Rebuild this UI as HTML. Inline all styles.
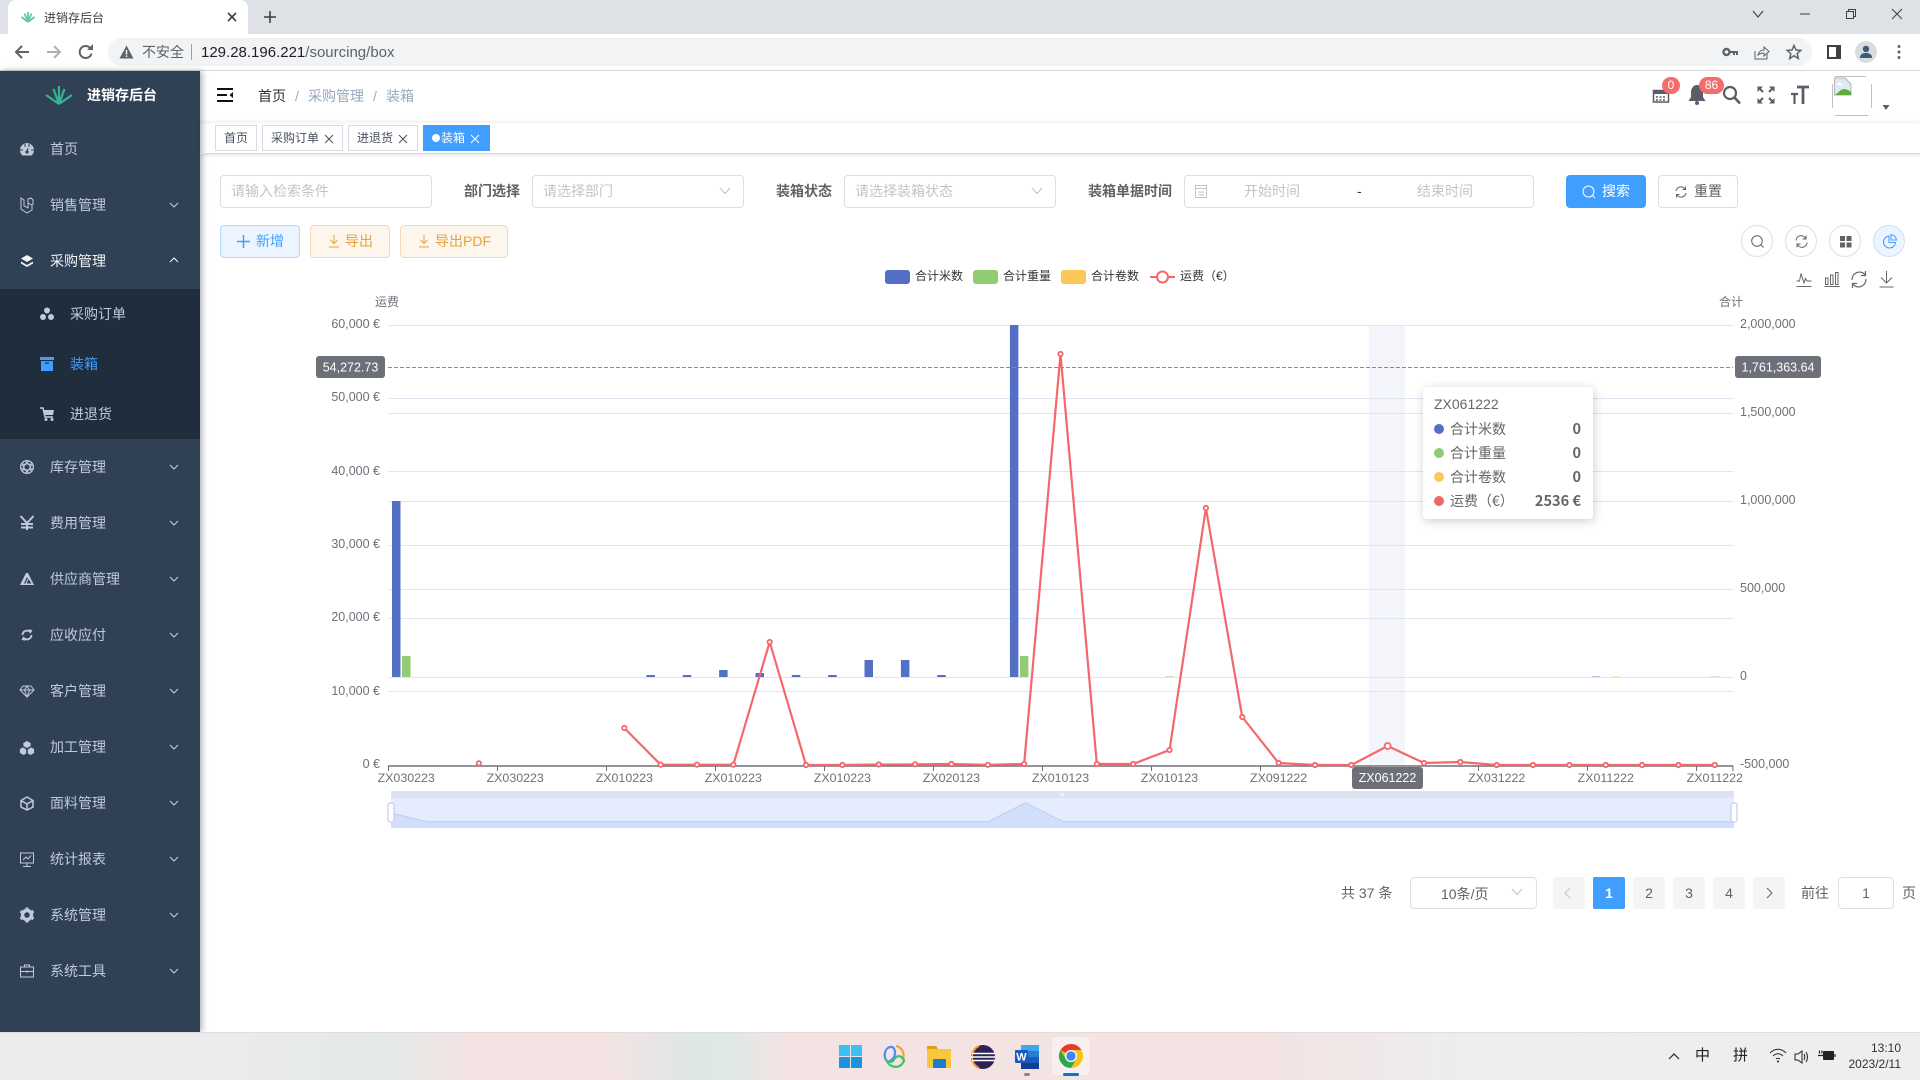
<!DOCTYPE html>
<html lang="zh-CN"><head><meta charset="utf-8"><title>进销存后台</title>
<style>
*{box-sizing:border-box}
html,body{margin:0;padding:0;width:1920px;height:1080px;overflow:hidden;background:#fff;font-family:"Liberation Sans","Noto Sans CJK SC",sans-serif;font-size:14px;color:#606266}
.a{position:absolute;white-space:nowrap}
svg{position:absolute;overflow:visible}
.row{position:absolute;left:0;width:200px;height:56px;line-height:56px;color:#bfcbd9;font-size:14px;padding-left:50px}
.sub{padding-left:70px;height:50px;line-height:50px}
.box{position:absolute;background:#fff;border:1px solid #dcdfe6;border-radius:4px;height:33px;line-height:31px;color:#c0c4cc;font-size:14px;padding-left:10px;white-space:nowrap}
.lb{position:absolute;top:175px;line-height:33px;font-weight:700;color:#606266;font-size:14px;white-space:nowrap}
.btn{position:absolute;border-radius:4px;height:33px;line-height:31px;font-size:14px;text-align:center;border:1px solid;white-space:nowrap}
.tag{position:absolute;top:125px;height:26px;line-height:24px;border:1px solid #d8dce5;font-size:12px;color:#495060;padding-left:8px;white-space:nowrap;background:#fff}
.pg{position:absolute;top:877px;width:32px;height:32px;line-height:32px;text-align:center;background:#f4f4f5;border-radius:2px;color:#606266;font-size:14px}
.cb{position:absolute;top:225px;width:32px;height:32px;border:1px solid #dcdfe6;border-radius:50%;background:#fff}
.tr{position:absolute;left:1434px;width:147px;height:24px;line-height:24px;font-size:14px;color:#666;padding-left:16px;font-family:"Noto Sans CJK SC","Liberation Sans",sans-serif}
.tr b{position:absolute;right:0;top:0;font-weight:700;color:#666;font-size:14.500px}
.tr i{position:absolute;left:0;top:7px;width:10px;height:10px;border-radius:50%}
</style></head><body>

<!-- browser chrome -->
<div class="a" style="left:0;top:0;width:1920px;height:34px;background:#dee1e6"></div>
<div class="a" style="left:8px;top:0;width:240px;height:34px;background:#fff;border-radius:8px 8px 0 0"></div>
<svg style="left:20px;top:9px" width="16" height="16" viewBox="0 0 16 16"><path d="M8 13 L8 3 M8 13 L4.500 4.500 M8 13 L11.500 4.500 M8 13 L1.500 8 M8 13 L14.500 8" stroke="#5fc9ab" stroke-width="1.800" fill="none"/></svg>
<div class="a" style="left:44px;top:11px;font-size:12px;line-height:15px;color:#3c4043">进销存后台</div>
<svg style="left:226px;top:11px" width="12" height="12"><path d="M2 2L10 10M10 2L2 10" stroke="#3c4043" stroke-width="1.600"/></svg>
<svg style="left:263px;top:10px" width="14" height="14"><path d="M7 1V13M1 7H13" stroke="#3c4043" stroke-width="1.600"/></svg>
<svg style="left:1751px;top:9px" width="14" height="10"><path d="M2 2L7 8L12 2" stroke="#3c4043" stroke-width="1.100" fill="none"/></svg>
<svg style="left:1800px;top:13px" width="10" height="2"><path d="M0 1H10" stroke="#3c4043" stroke-width="1"/></svg>
<svg style="left:1846px;top:9px" width="10" height="10"><path d="M0.500 2.500H7.500V9.500H0.500Z M2.500 2.500V0.500H9.500V7.500H7.500" stroke="#3c4043" fill="none"/></svg>
<svg style="left:1892px;top:9px" width="10" height="10"><path d="M0 0L10 10M10 0L0 10" stroke="#3c4043" stroke-width="1"/></svg>

<div class="a" style="left:0;top:34px;width:1920px;height:37px;background:#fff;border-bottom:1px solid #dadce0"></div>
<svg style="left:14px;top:44px" width="16" height="16"><path d="M15 8H2M8 2L2 8L8 14" stroke="#5f6368" stroke-width="2" fill="none"/></svg>
<svg style="left:46px;top:44px" width="16" height="16"><path d="M1 8H14M8 2L14 8L8 14" stroke="#aeb1b5" stroke-width="2" fill="none"/></svg>
<svg style="left:78px;top:44px" width="16" height="16"><path d="M13.500 9.500A6 6 0 1 1 12 3.800" stroke="#5f6368" stroke-width="2" fill="none"/><path d="M9 6H15V0Z" fill="#5f6368"/></svg>
<div class="a" style="left:108px;top:38px;width:1704px;height:28px;border-radius:14px;background:#f1f3f4"></div>
<svg style="left:119px;top:45px" width="15" height="14"><path d="M7.500 0.500L14.500 13.500H0.500Z" fill="#5f6368"/><path d="M7.500 5V9.500M7.500 10.500V12" stroke="#f1f3f4" stroke-width="1.500"/></svg>
<div class="a" style="left:142px;top:44px;font-size:14px;line-height:16px;color:#5f6368">不安全</div>
<div class="a" style="left:191px;top:44px;width:1px;height:16px;background:#9aa0a6"></div>
<div class="a" style="left:201px;top:44px;font-size:15px;line-height:17px;color:#202124">129.28.196.221<span style="color:#5f6368">/sourcing/box</span></div>
<svg style="left:1722px;top:46px" width="16" height="12"><circle cx="4.500" cy="6" r="3" fill="none" stroke="#5f6368" stroke-width="2.400"/><path d="M7 6H15V9M12 6V9" stroke="#5f6368" stroke-width="2" fill="none"/></svg>
<svg style="left:1754px;top:44px" width="16" height="16"><path d="M1 7V15H13V10" stroke="#5f6368" fill="none"/><path d="M4 11C5 7 8 6 10 6V3L15 7.500L10 12V9C8 9 6 9.500 4 11Z" stroke="#5f6368" fill="none"/></svg>
<svg style="left:1786px;top:44px" width="16" height="16"><path d="M8 1.500L10 6L14.800 6.400L11.200 9.600L12.300 14.500L8 11.800L3.700 14.500L4.800 9.600L1.200 6.400L6 6Z" stroke="#5f6368" stroke-width="1.500" fill="none"/></svg>
<svg style="left:1827px;top:45px" width="14" height="14"><path d="M1 1H13V13H1Z" fill="none" stroke="#3c4043" stroke-width="2"/><path d="M9 1H13V13H9Z" fill="#3c4043"/></svg>
<div class="a" style="left:1855px;top:41px;width:22px;height:22px;border-radius:50%;background:#dadce0"></div>
<svg style="left:1860px;top:45px" width="12" height="14"><circle cx="6" cy="4" r="3.200" fill="#3c5a7a"/><path d="M0 13C0 9 3 8 6 8S12 9 12 13Z" fill="#3c5a7a"/></svg>
<svg style="left:1897px;top:44px" width="4" height="16"><circle cx="2" cy="2.500" r="1.500" fill="#5f6368"/><circle cx="2" cy="8" r="1.500" fill="#5f6368"/><circle cx="2" cy="13.500" r="1.500" fill="#5f6368"/></svg>

<!-- sidebar -->
<div class="a" style="left:0;top:71px;width:200px;height:961px;background:#304156;box-shadow:2px 0 6px rgba(0,21,41,.35)"></div>
<div class="a" style="left:0;top:289px;width:200px;height:150px;background:#1f2d3d"></div>
<svg style="left:45px;top:85px" width="28" height="20" viewBox="0 0 28 20"><path d="M14 19L14 1M14 19L8.500 4M14 19L19.500 4M14 19L1 10M14 19L27 10" stroke="#36b392" stroke-width="2.200" fill="none"/></svg>
<div class="a" style="left:87px;top:87px;font-size:14px;line-height:17px;font-weight:700;color:#fff">进销存后台</div>

<div class="row" style="top:121px">首页</div>
<div class="row" style="top:177px">销售管理</div>
<div class="row" style="top:233px;color:#f4f4f5">采购管理</div>
<div class="row sub" style="top:289px">采购订单</div>
<div class="row sub" style="top:339px;color:#409eff">装箱</div>
<div class="row sub" style="top:389px">进退货</div>
<div class="row" style="top:439px">库存管理</div>
<div class="row" style="top:495px">费用管理</div>
<div class="row" style="top:551px">供应商管理</div>
<div class="row" style="top:607px">应收应付</div>
<div class="row" style="top:663px">客户管理</div>
<div class="row" style="top:719px">加工管理</div>
<div class="row" style="top:775px">面料管理</div>
<div class="row" style="top:831px">统计报表</div>
<div class="row" style="top:887px">系统管理</div>
<div class="row" style="top:943px">系统工具</div>

<svg style="left:0;top:0" width="200" height="1032" fill="none" stroke="#bfcbd9">
<g stroke-width="1.100">
<path d="M170 203l4 4 4-4"/><path d="M170 262l4-4 4 4" stroke="#f4f4f5"/>
<path d="M170 465l4 4 4-4"/><path d="M170 521l4 4 4-4"/><path d="M170 577l4 4 4-4"/><path d="M170 633l4 4 4-4"/><path d="M170 689l4 4 4-4"/><path d="M170 745l4 4 4-4"/><path d="M170 801l4 4 4-4"/><path d="M170 857l4 4 4-4"/><path d="M170 913l4 4 4-4"/><path d="M170 969l4 4 4-4"/>
</g>
<!-- dashboard -->
<path d="M22.500 155.500A7 7 0 1 1 31.500 155.500Z" fill="#bfcbd9" stroke="none"/><circle cx="27" cy="152" r="1.600" fill="#304156" stroke="none"/><path d="M25 144V147M29 144V147M20 150H23M31 150H34M27 152L28 148" stroke="#304156" stroke-width="1"/>
<!-- laravel-like -->
<path d="M21 199V209L27 213L32 210V205L28 203V208L24 206V200L21 198ZM28 203L28 199L31 198L33 200V205"/>
<!-- layers -->
<path d="M27 255L33 258.500L27 262L21 258.500Z" fill="#f4f4f5" stroke="none"/><path d="M21 261.500L27 265L33 261.500V263.500L27 267L21 263.500Z" fill="#f4f4f5" stroke="none"/>
<!-- three dots -->
<circle cx="47" cy="310.500" r="3" fill="#bfcbd9" stroke="none"/><circle cx="43" cy="317" r="3" fill="#bfcbd9" stroke="none"/><circle cx="51" cy="317" r="3" fill="#bfcbd9" stroke="none"/>
<!-- archive box -->
<path d="M40 357H54V360H40Z" fill="#409eff" stroke="none"/><path d="M41 361H53V371H41Z" fill="#409eff" stroke="none"/><path d="M45 363H49" stroke="#1f2d3d" stroke-width="1.200"/>
<!-- cart -->
<path d="M40 408H43L45 417H53" stroke-width="1.600"/><path d="M44 410H54L53 415H45Z" fill="#bfcbd9" stroke="none"/><circle cx="46" cy="419.500" r="1.500" fill="#bfcbd9" stroke="none"/><circle cx="52" cy="419.500" r="1.500" fill="#bfcbd9" stroke="none"/>
<!-- knot -->
<g stroke-width="1"><circle cx="27" cy="467" r="6.500"/><ellipse cx="27" cy="467" rx="6.500" ry="3"/><ellipse cx="27" cy="467" rx="6.500" ry="3" transform="rotate(60 27 467)"/><ellipse cx="27" cy="467" rx="6.500" ry="3" transform="rotate(120 27 467)"/></g>
<!-- yen -->
<path d="M20.500 516L27 523L33.500 516M27 523V530M21 524H33M21 527.500H33" stroke-width="2"/>
<!-- triangle -->
<path d="M26 573H28L34 585H20ZM27 577L24 583.500H25.500L27.800 578.500ZM28.500 579L26.800 583.500H31.500Z" fill="#bfcbd9" fill-rule="evenodd" stroke="none"/>
<!-- refresh -->
<path d="M22.500 635A4.500 4.500 0 0 1 30 631.800M31.500 635A4.500 4.500 0 0 1 24 638.200" stroke-width="1.800"/><path d="M29 629L32.500 630.500L30 634ZM25 641L21.500 639.500L24 636Z" fill="#bfcbd9" stroke="none"/>
<!-- diamond -->
<path d="M23 686H31L34 690L27 697L20 690ZM20 690H34M24.500 690L27 697L29.500 690L27 686L24.500 690" stroke-width="1"/>
<!-- cubes -->
<path d="M27 740.500L31 742.800V747.200L27 749.500L23 747.200V742.800Z M23.500 746.500L27.500 748.800V753.200L23.500 755.500L19.500 753.200V748.800Z M30.500 746.500L34.500 748.800V753.200L30.500 755.500L26.500 753.200V748.800Z" fill="#bfcbd9" stroke="#304156" stroke-width=".8"/>
<!-- cube outline -->
<path d="M27 797L33 800.500V807L27 810L21 807V800.500ZM21 800.500L27 804L33 800.500M27 804V810" stroke-width="1.500"/>
<!-- monitor -->
<path d="M20.500 853H33.500V863H20.500ZM27 863V866M23 866.500H31M23 860L26 857L28 859L31 855.500" stroke-width="1"/>
<!-- gear -->
<circle cx="27" cy="915" r="4.500" stroke-width="3.500"/><path d="M27 907.500V909M27 921V922.500M20.500 911.200L21.800 912M32.200 918L33.500 918.800M20.500 918.800L21.800 918M32.200 912L33.500 911.200" stroke-width="3"/>
<!-- case -->
<path d="M20.500 967H33.500V977H20.500ZM24.500 967V965H29.500V967M20.500 971.500H33.500M27 970.500V973" stroke-width="1"/>
</svg>

<!-- header -->
<div class="a" style="left:200px;top:71px;width:1720px;height:50px;box-shadow:0 1px 4px rgba(0,21,41,.08)"></div>
<svg style="left:217px;top:88px" width="16" height="14"><path d="M0 1H16M0 7H10M0 13H16" stroke="#111" stroke-width="2"/><path d="M16 4V10L12.500 7Z" fill="#111"/></svg>
<div class="a" style="left:258px;top:88px;font-size:14px;line-height:16px;color:#303133;font-weight:400">首页</div>
<div class="a" style="left:295px;top:88px;font-size:14px;line-height:16px;color:#97a8be">/</div>
<div class="a" style="left:308px;top:88px;font-size:14px;line-height:16px;color:#97a8be">采购管理</div>
<div class="a" style="left:373px;top:88px;font-size:14px;line-height:16px;color:#97a8be">/</div>
<div class="a" style="left:386px;top:88px;font-size:14px;line-height:16px;color:#97a8be">装箱</div>

<svg style="left:0;top:0" width="1920" height="125" fill="none">
<!-- calendar -->
<path d="M1653.500 90.500H1668.500V102H1653.500Z" stroke="#5a5e66" stroke-width="1.500"/><path d="M1653.500 90H1668.500V94H1653.500Z" fill="#5a5e66"/><path d="M1656 97H1666M1656 100H1666" stroke="#5a5e66" stroke-width="1.500" stroke-dasharray="2 1.500"/>
<!-- bell -->
<path d="M1697 85C1693 85 1691 89 1691 92V97L1688.500 101H1705.500L1703 97V92C1703 89 1701 85 1697 85Z" fill="#5a5e66"/><circle cx="1697" cy="103" r="2" fill="#5a5e66"/>
<!-- search -->
<circle cx="1730" cy="93" r="6" stroke="#5a5e66" stroke-width="2.200"/><path d="M1734.500 97.500L1740 103.500" stroke="#5a5e66" stroke-width="2.600"/>
<!-- fullscreen -->
<path d="M1757.500 86.500H1763L1757.500 92ZM1774.500 86.500H1769L1774.500 92ZM1757.500 103.500H1763L1757.500 98ZM1774.500 103.500H1769L1774.500 98Z" fill="#5a5e66"/><path d="M1759 88L1763 92M1773 88L1769 92M1759 102L1763 98M1773 102L1769 98" stroke="#5a5e66" stroke-width="2"/>
<!-- size -->
<path d="M1797 87H1809M1803 87V104" stroke="#5a5e66" stroke-width="2.800"/><path d="M1791 94H1798M1794.500 94V104" stroke="#5a5e66" stroke-width="2.200"/>
<!-- caret -->
<path d="M1882.500 105H1889.500L1886 110Z" fill="#5a5e66"/>
<!-- avatar box -->
<path d="M1832.500 84V108M1871.500 84V108M1835 76.500H1866M1835 115.500H1868" stroke="#c0c0c0" stroke-width="1"/>
<path d="M1834.500 78H1845L1851 84V95H1834.500Z" fill="#dfe8f5" stroke="#b5b5b5"/><path d="M1835 95L1841 90C1845 88 1848 90 1851 92V95Z" fill="#5cab3c"/><path d="M1836 85L1839 82L1844 86Z" fill="#fff"/>
</svg>
<div class="a" style="left:1662px;top:77px;width:18px;height:17px;border-radius:9px;background:#f56c6c;color:#fff;font-size:12px;line-height:17px;text-align:center">0</div>
<div class="a" style="left:1699px;top:77px;width:25px;height:17px;border-radius:9px;background:#f56c6c;color:#fff;font-size:12px;line-height:17px;text-align:center">86</div>

<!-- tags -->
<div class="a" style="left:200px;top:121px;width:1720px;height:33px;border-bottom:1px solid #d8dce5;box-shadow:0 1px 3px rgba(0,0,0,.12)"></div>
<div class="tag" style="left:215px;width:42px">首页</div>
<div class="tag" style="left:262px;width:81px">采购订单<svg style="left:62px;top:9px" width="8" height="8"><path d="M0 0L8 8M8 0L0 8" stroke="#495060"/></svg></div>
<div class="tag" style="left:348px;width:70px">进退货<svg style="left:50px;top:9px" width="8" height="8"><path d="M0 0L8 8M8 0L0 8" stroke="#495060"/></svg></div>
<div class="tag" style="left:423px;width:67px;background:#409eff;border-color:#409eff;color:#fff"><span style="display:inline-block;width:8px;height:8px;border-radius:50%;background:#fff;margin-right:1px"></span>装箱<svg style="left:47px;top:9px" width="8" height="8"><path d="M0 0L8 8M8 0L0 8" stroke="#fff"/></svg></div>

<!-- filter -->
<div class="box" style="left:220px;top:175px;width:212px">请输入检索条件</div>
<div class="lb" style="left:464px">部门选择</div>
<div class="box" style="left:532px;top:175px;width:212px">请选择部门</div>
<div class="lb" style="left:776px">装箱状态</div>
<div class="box" style="left:844px;top:175px;width:212px">请选择装箱状态</div>
<div class="lb" style="left:1088px">装箱单据时间</div>
<div class="box" style="left:1184px;top:175px;width:350px"></div>
<div class="a" style="left:1244px;top:175px;line-height:33px;color:#c0c4cc">开始时间</div>
<div class="a" style="left:1357px;top:175px;line-height:33px;color:#303133">-</div>
<div class="a" style="left:1417px;top:175px;line-height:33px;color:#c0c4cc">结束时间</div>
<svg style="left:0;top:0" width="1920" height="260" fill="none">
<path d="M720 188l5 5.500 5-5.500M1032 188l5 5.500 5-5.500" stroke="#c0c4cc" stroke-width="1.100"/>
<path d="M1195.500 185.500H1206.500V197.500H1195.500ZM1195.500 188.500H1206.500M1198 192H1204M1198 195H1204" stroke="#c0c4cc"/>
</svg>
<div class="btn" style="left:1566px;top:175px;width:80px;background:#409eff;border-color:#409eff;color:#fff;padding-left:20px">搜索<svg style="left:15px;top:9px" width="14" height="14" fill="none"><circle cx="6.500" cy="6.500" r="5.500" stroke="#fff"/><path d="M10.500 10.500L13 13" stroke="#fff"/></svg></div>
<div class="btn" style="left:1658px;top:175px;width:80px;background:#fff;border-color:#dcdfe6;color:#606266;padding-left:20px">重置<svg style="left:16px;top:10px" width="12" height="12" fill="none"><path d="M1 5A5 5 0 0 1 10 3M11 7A5 5 0 0 1 2 9" stroke="#606266"/><path d="M10.500 0.500V3.500H7.500M1.500 11.500V8.500H4.500" stroke="#606266"/></svg></div>

<div class="btn" style="left:220px;top:225px;width:80px;background:#ecf5ff;border-color:#b3d8ff;color:#409eff;padding-left:20px">新增<svg style="left:16px;top:9px" width="13" height="13"><path d="M6.500 0V13M0 6.500H13" stroke="#409eff" stroke-width="1.500"/></svg></div>
<div class="btn" style="left:310px;top:225px;width:80px;background:#fdf6ec;border-color:#f5dab1;color:#e6a23c;padding-left:18px">导出<svg style="left:17px;top:9px" width="12" height="13" fill="none"><path d="M6 0V8M2.500 5L6 8.500L9.500 5M1 12H11" stroke="#e6a23c"/></svg></div>
<div class="btn" style="left:400px;top:225px;width:108px;background:#fdf6ec;border-color:#f5dab1;color:#e6a23c;padding-left:18px">导出PDF<svg style="left:17px;top:9px" width="12" height="13" fill="none"><path d="M6 0V8M2.500 5L6 8.500L9.500 5M1 12H11" stroke="#e6a23c"/></svg></div>

<div class="cb" style="left:1741px"><svg style="left:9px;top:9px" width="13" height="13" fill="none"><circle cx="6" cy="6" r="5.300" stroke="#606266"/><path d="M10 10L12.500 12.500" stroke="#606266"/></svg></div>
<div class="cb" style="left:1785px"><svg style="left:9px;top:9px" width="13" height="13" fill="none"><path d="M1 5.500A5 5 0 0 1 10.500 3.500M12 7.500A5 5 0 0 1 2.500 9.500" stroke="#606266"/><path d="M11 0.500V4H7.500M2 12.500V9H5.500" stroke="#606266"/></svg></div>
<div class="cb" style="left:1829px"><svg style="left:9px;top:9px" width="13" height="13"><path d="M1 1H6V6H1ZM7.500 1H12.500V6H7.500ZM1 7.500H6V12.500H1ZM7.500 7.500H12.500V12.500H7.500Z" fill="#606266"/></svg></div>
<div class="cb" style="left:1873px;background:#ecf5ff;border-color:#c6e2ff"><svg style="left:9px;top:8px" width="14" height="14" fill="none"><path d="M6 2A6 6 0 1 0 12.500 8.500H6ZM8 0.500A6 6 0 0 1 13.500 6H8Z" stroke="#409eff"/></svg></div>

<!-- chart -->
<svg style="left:0;top:0;font-family:'Liberation Sans','Noto Sans CJK SC',sans-serif" width="1920" height="1032" font-size="12.500" fill="#6e7079">
<!-- legend -->
<rect x="885" y="270" width="25" height="14" rx="3" fill="#5470c6"/>
<rect x="973" y="270" width="25" height="14" rx="3" fill="#91cc75"/>
<rect x="1061" y="270" width="25" height="14" rx="3" fill="#fac858"/>
<path d="M1150 277H1175" stroke="#f4686c" stroke-width="2"/><circle cx="1162.500" cy="277" r="5.500" fill="#fff" stroke="#f4686c" stroke-width="2"/>
<g font-size="12" fill="#333"><text x="915" y="280">合计米数</text><text x="1003" y="280">合计重量</text><text x="1091" y="280">合计卷数</text><text x="1180" y="280">运费（€）</text></g>
<!-- toolbox -->
<g fill="none" stroke="#666" stroke-width="1" transform="translate(0 -1)">
<path d="M1796.500 287.500H1811.500M1796.500 282H1799.500L1801 274.500L1804 284L1805.500 279.500L1807 282H1811.500"/>
<path d="M1824.500 287.500H1839.500M1825.500 285.500V279H1828V285.500ZM1830.500 285.500V276H1833V285.500ZM1835.500 285.500V273.500H1838V285.500Z"/>
<path d="M1852 281A7.500 7.500 0 0 1 1865 275.500M1866 280A7.500 7.500 0 0 1 1853 285.500" stroke-width="1.200"/><path d="M1865.500 272V276.500H1861M1852.500 289V284.500H1857" stroke-width="1.200"/>
<path d="M1886.500 272V284M1881 278.500L1886.500 284L1892 278.500M1879.500 288H1893.500"/>
</g>
<!-- axis names -->
<g font-size="12"><text x="387" y="306" text-anchor="middle">运费</text><text x="1731" y="306" text-anchor="middle">合计</text></g>
<!-- shadow -->
<rect x="1369" y="325" width="36" height="441" fill="#f3f5fb"/>
<!-- grid -->
<g stroke="#e0e6f1" stroke-width="1" fill="none">
<path d="M388 325.500H1733M388 398.500H1733M388 471.500H1733M388 545.500H1733M388 618.500H1733M388 691.500H1733"/>
<path d="M388 413.500H1733M388 501.500H1733M388 589.500H1733M388 677.500H1733"/>
</g>
<!-- bars -->
<g fill="#5470c6">
<rect x="392" y="501" width="8.500" height="176"/>
<rect x="646.400" y="675" width="8.500" height="2"/>
<rect x="682.800" y="675" width="8.500" height="2"/>
<rect x="719.100" y="670" width="8.500" height="7"/>
<rect x="755.500" y="673" width="8.500" height="4"/>
<rect x="791.800" y="675" width="8.500" height="2"/>
<rect x="828.200" y="675" width="8.500" height="2"/>
<rect x="864.500" y="660" width="8.500" height="17"/>
<rect x="900.900" y="660" width="8.500" height="17"/>
<rect x="937.200" y="675" width="8.500" height="2"/>
<rect x="1009.900" y="325" width="8.500" height="352"/>
<rect x="1591.500" y="676" width="8.500" height="1" opacity=".4"/>
</g>
<g fill="#91cc75">
<rect x="402" y="656" width="8.500" height="21"/>
<rect x="1019.900" y="656" width="8.500" height="21"/>
<rect x="1165.300" y="676" width="8.500" height="1" opacity=".5"/>
<rect x="1710.600" y="676" width="8.500" height="1" opacity=".4"/>
</g>
<rect x="1611.500" y="676" width="8.500" height="1" fill="#fac858" opacity=".5"/>
<!-- x axis -->
<path d="M388 766H1733" stroke="#6e7079" stroke-width="1.500"/>
<path d="M388.500 766V771M497.500 766V771M606.500 766V771M715.500 766V771M824.500 766V771M933.500 766V771M1042.500 766V771M1151.500 766V771M1260.500 766V771M1369.500 766V771M1478.500 766V771M1587.500 766V771M1696.500 766V771M1733 766V771" stroke="#6e7079" stroke-width="1"/>
<g text-anchor="middle" font-size="12.400">
<text x="406.200" y="782">ZX030223</text><text x="515.200" y="782">ZX030223</text><text x="624.300" y="782">ZX010223</text><text x="733.300" y="782">ZX010223</text><text x="842.400" y="782">ZX010223</text><text x="951.400" y="782">ZX020123</text><text x="1060.500" y="782">ZX010123</text><text x="1169.500" y="782">ZX010123</text><text x="1278.600" y="782">ZX091222</text><text x="1496.700" y="782">ZX031222</text><text x="1605.800" y="782">ZX011222</text><text x="1714.800" y="782">ZX011222</text>
</g>
<!-- left labels -->
<g text-anchor="end"><text x="380" y="328">60,000 €</text><text x="380" y="401">50,000 €</text><text x="380" y="475">40,000 €</text><text x="380" y="548">30,000 €</text><text x="380" y="621">20,000 €</text><text x="380" y="695">10,000 €</text><text x="380" y="768">0 €</text></g>
<!-- right labels -->
<g><text x="1740" y="328">2,000,000</text><text x="1740" y="416">1,500,000</text><text x="1740" y="504">1,000,000</text><text x="1740" y="592">500,000</text><text x="1740" y="680">0</text><text x="1740" y="768">-500,000</text></g>
<!-- crosshair -->
<path d="M388 367.500H1733" stroke="#8a8a8a" stroke-width="1" stroke-dasharray="4 2"/>
<!-- line -->
<polyline fill="none" stroke="#f4686c" stroke-width="2.200" stroke-linejoin="bevel" points="624.300,728 660.650,764.700 697,764.700 733.350,764.700 769.700,642 806.050,765 842.400,765 878.750,764.500 915.100,764.300 951.450,764 987.800,764.800 1024.150,764 1060.500,354 1096.850,764 1133.200,764 1169.550,750 1205.900,508 1242.250,717 1278.600,763 1314.950,765 1351.300,765 1387.650,746 1424,763 1460.350,762 1496.700,765 1533.050,765 1569.400,765 1605.750,765 1642.100,765 1678.450,765 1714.800,765"/>
<g fill="#fff" stroke="#f4686c" stroke-width="1.800">
<circle cx="478.900" cy="763.300" r="2.200"/><circle cx="624.300" cy="728" r="2.200"/><circle cx="660.650" cy="764.700" r="2.200"/><circle cx="697" cy="764.700" r="2.200"/><circle cx="733.350" cy="764.700" r="2.200"/><circle cx="769.700" cy="642" r="2.200"/><circle cx="806.050" cy="765" r="2.200"/><circle cx="842.400" cy="765" r="2.200"/><circle cx="878.750" cy="764.500" r="2.200"/><circle cx="915.100" cy="764.300" r="2.200"/><circle cx="951.450" cy="764" r="2.200"/><circle cx="987.800" cy="764.800" r="2.200"/><circle cx="1024.150" cy="764" r="2.200"/><circle cx="1060.500" cy="354" r="2.200"/><circle cx="1096.850" cy="764" r="2.200"/><circle cx="1133.200" cy="764" r="2.200"/><circle cx="1169.550" cy="750" r="2.200"/><circle cx="1205.900" cy="508" r="2.200"/><circle cx="1242.250" cy="717" r="2.200"/><circle cx="1278.600" cy="763" r="2.200"/><circle cx="1314.950" cy="765" r="2.200"/><circle cx="1351.300" cy="765" r="2.200"/><circle cx="1387.650" cy="746" r="3"/><circle cx="1424" cy="763" r="2.200"/><circle cx="1460.350" cy="762" r="2.200"/><circle cx="1496.700" cy="765" r="2.200"/><circle cx="1533.050" cy="765" r="2.200"/><circle cx="1569.400" cy="765" r="2.200"/><circle cx="1605.750" cy="765" r="2.200"/><circle cx="1642.100" cy="765" r="2.200"/><circle cx="1678.450" cy="765" r="2.200"/><circle cx="1714.800" cy="765" r="2.200"/>
</g>
<!-- axis pointer labels -->
<rect x="316" y="356" width="69" height="22" rx="3" fill="#6e7079"/><text x="350.500" y="371.500" text-anchor="middle" fill="#fff">54,272.73</text>
<rect x="1735" y="356" width="86" height="22" rx="3" fill="#6e7079"/><text x="1778" y="371.500" text-anchor="middle" fill="#fff">1,761,363.64</text>
<rect x="1352" y="767" width="71" height="22" rx="3" fill="#6e7079"/><text x="1387.500" y="782" text-anchor="middle" fill="#fff">ZX061222</text>
<!-- datazoom -->
<rect x="391" y="791" width="1343" height="7" fill="#dde3ee"/>
<rect x="391" y="798" width="1343" height="30" fill="#e5ecfd"/>
<path d="M391 813L427.500 821.700H988L1025.500 802.700L1063 821.700H1734V828H391Z" fill="#d2dffb"/>
<path d="M391 813L427.500 821.700H988L1025.500 802.700L1063 821.700H1734" fill="none" stroke="#bccdf5"/>
<rect x="388" y="803" width="6" height="19" rx="2" fill="#fff" stroke="#bcc6dc"/>
<rect x="1731" y="803" width="6" height="19" rx="2" fill="#fff" stroke="#bcc6dc"/>
<path d="M1061 793V796M1063 793V796" stroke="#fff"/>
</svg>

<!-- tooltip -->
<div class="a" style="left:1423px;top:387px;width:170px;height:132px;background:#fff;border-radius:4px;box-shadow:1px 2px 10px rgba(0,0,0,.2)"></div>
<div class="a" style="left:1434px;top:396px;font-size:14px;line-height:17px;color:#666">ZX061222</div>
<div class="tr" style="top:417px"><i style="background:#5470c6"></i>合计米数<b>0</b></div>
<div class="tr" style="top:441px"><i style="background:#91cc75"></i>合计重量<b>0</b></div>
<div class="tr" style="top:465px"><i style="background:#fac858"></i>合计卷数<b>0</b></div>
<div class="tr" style="top:489px"><i style="background:#ee6666"></i>运费（€）<b>2536 €</b></div>

<!-- pagination -->
<div class="a" style="left:1341px;top:885px;font-size:14px;line-height:16px;color:#606266">共 37 条</div>
<div class="box" style="left:1410px;top:877px;width:127px;height:32px;line-height:32px;color:#606266;font-size:14px;padding-left:30px">10条/页</div>
<svg style="left:1511px;top:888px" width="12" height="8" fill="none"><path d="M1 1l5 5.500 5-5.500" stroke="#c0c4cc" stroke-width="1.100"/></svg>
<div class="pg" style="left:1553px"></div><svg style="left:1564px;top:887px" width="8" height="12" fill="none"><path d="M6 1L1 6L6 11" stroke="#c0c4cc"/></svg>
<div class="pg" style="left:1593px;background:#409eff;color:#fff;font-weight:700">1</div>
<div class="pg" style="left:1633px">2</div>
<div class="pg" style="left:1673px">3</div>
<div class="pg" style="left:1713px">4</div>
<div class="pg" style="left:1753px"></div><svg style="left:1766px;top:887px" width="8" height="12" fill="none"><path d="M1 1L6 6L1 11" stroke="#606266"/></svg>
<div class="a" style="left:1801px;top:885px;font-size:14px;line-height:16px;color:#606266">前往</div>
<div class="box" style="left:1838px;top:877px;width:56px;height:32px;line-height:30px;color:#606266;font-size:14px;padding:0;text-align:center">1</div>
<div class="a" style="left:1902px;top:885px;font-size:14px;line-height:16px;color:#606266">页</div>

<!-- taskbar -->
<div class="a" style="left:0;top:1032px;width:1920px;height:48px;border-top:1px solid #e2dcdc;background:linear-gradient(90deg,#ebebeb 0,#ebebeb 12%,#e2e9e8 20%,#f3e3e3 24%,#f3e3e3 32%,#dde7e6 36%,#dfe8e6 38%,#f3e4e3 41%,#f3e3e3 66%,#ededed 76%,#eeeeee 100%)"></div>
<svg style="left:0;top:1033px" width="1920" height="47" fill="none">
<!-- windows -->
<path d="M839 12H850V23H839ZM851 12H862V23H851ZM839 24H850V35H839ZM851 24H862V35H851Z" fill="#1a94e0"/>
<path d="M839 12H850V23H839ZM851 12H862V23H851Z" fill="#3cc0f2"/>
<!-- navicat -->
<path d="M888 29C882 24 885 15 890 14C895 13 896 20 894 24C892 28 889 28 888 29Z" stroke="#4c8bf0" stroke-width="2.200"/>
<path d="M896 13C902 14 906 22 902 27" stroke="#f5a623" stroke-width="2.200"/>
<path d="M887 28C890 36 902 36 904 27C902 23 898 22 895 25C893 29 891 30 887 28Z" stroke="#3fc36f" stroke-width="2.200"/>
<!-- folder -->
<path d="M927 13H936L938 16H951V35H927Z" fill="#f7c83e"/><path d="M927 13H936L938 16H927Z" fill="#d99f18"/><path d="M933 28C933 26 934 26 935 26H945C946 26 946 27 946 28V35H933Z" fill="#1a7fc8"/>
<!-- eclipse -->
<circle cx="983" cy="24" r="12" fill="#2c2255"/><path d="M972 24A11.500 11.500 0 0 1 979 13" stroke="#f09b2c" stroke-width="2"/><path d="M972 24A11.500 11.500 0 0 0 979 35" stroke="#f09b2c" stroke-width="2"/><path d="M972 20.500H995M971 24H995M972 27.500H995" stroke="#fff" stroke-width="1.500"/>
<!-- word -->
<path d="M1021 12H1039V36H1021Z" fill="#2b7cd3"/><path d="M1021 12H1039V18H1021Z" fill="#41a5ee"/><path d="M1021 24H1039V30H1021Z" fill="#185abd"/><path d="M1021 30H1039V36H1021Z" fill="#103f91"/>
<rect x="1015" y="17" width="13" height="13" rx="1" fill="#185abd"/>
<text x="1021.500" y="27.500" font-family="Liberation Sans" font-weight="700" font-size="11" fill="#fff" text-anchor="middle">W</text>
<rect x="1024" y="40" width="6" height="3" rx="1.500" fill="#8a8a8a"/>
<!-- chrome -->
<rect x="1052" y="4" width="38" height="38" rx="4" fill="#f8efee"/>
<circle cx="1071" cy="23" r="12" fill="#fbc116"/>
<path d="M1060.600 17A12 12 0 0 1 1081.400 17H1071A6 6 0 0 0 1065.800 20Z" fill="#e33b2e"/>
<path d="M1060.600 17A12 12 0 0 0 1071 35L1076.200 26A6 6 0 0 1 1065.800 26Z" fill="#2fa84f"/>
<circle cx="1071" cy="23" r="6" fill="#fff"/><circle cx="1071" cy="23" r="4.700" fill="#4285f4"/>
<rect x="1063" y="40" width="16" height="3" rx="1.500" fill="#0a74da"/>
<!-- tray -->
<path d="M1669 26L1674 21L1679 26" stroke="#222" stroke-width="1.200"/>
<path d="M1770 20C1775 15 1781 15 1786 20M1773 23C1776 20 1780 20 1783 23M1776 26C1777 25 1779 25 1780 26" stroke="#222"/><circle cx="1778" cy="28.500" r="1" fill="#222"/>
<path d="M1795 21H1798L1802 18V30L1798 27H1795Z" stroke="#222"/><path d="M1804 21C1805 23 1805 25 1804 27M1806 19C1808 22 1808 26 1806 29" stroke="#222"/>
<rect x="1823" y="18" width="11" height="9" rx="1" fill="#222"/><path d="M1818 22.500H1823M1819.500 20.500V17.500M1822 20.500V17.500M1835 21V24" stroke="#222" stroke-width="1.200"/>
</svg>
<div class="a" style="left:1695px;top:1047px;font-size:15px;line-height:17px;color:#222">中</div>
<div class="a" style="left:1733px;top:1047px;font-size:15px;line-height:17px;color:#222">拼</div>
<div class="a" style="left:1820px;top:1041px;width:81px;text-align:right;font-size:12px;line-height:15px;color:#333">13:10</div>
<div class="a" style="left:1820px;top:1057px;width:81px;text-align:right;font-size:12px;line-height:15px;color:#333">2023/2/11</div>
</body></html>
